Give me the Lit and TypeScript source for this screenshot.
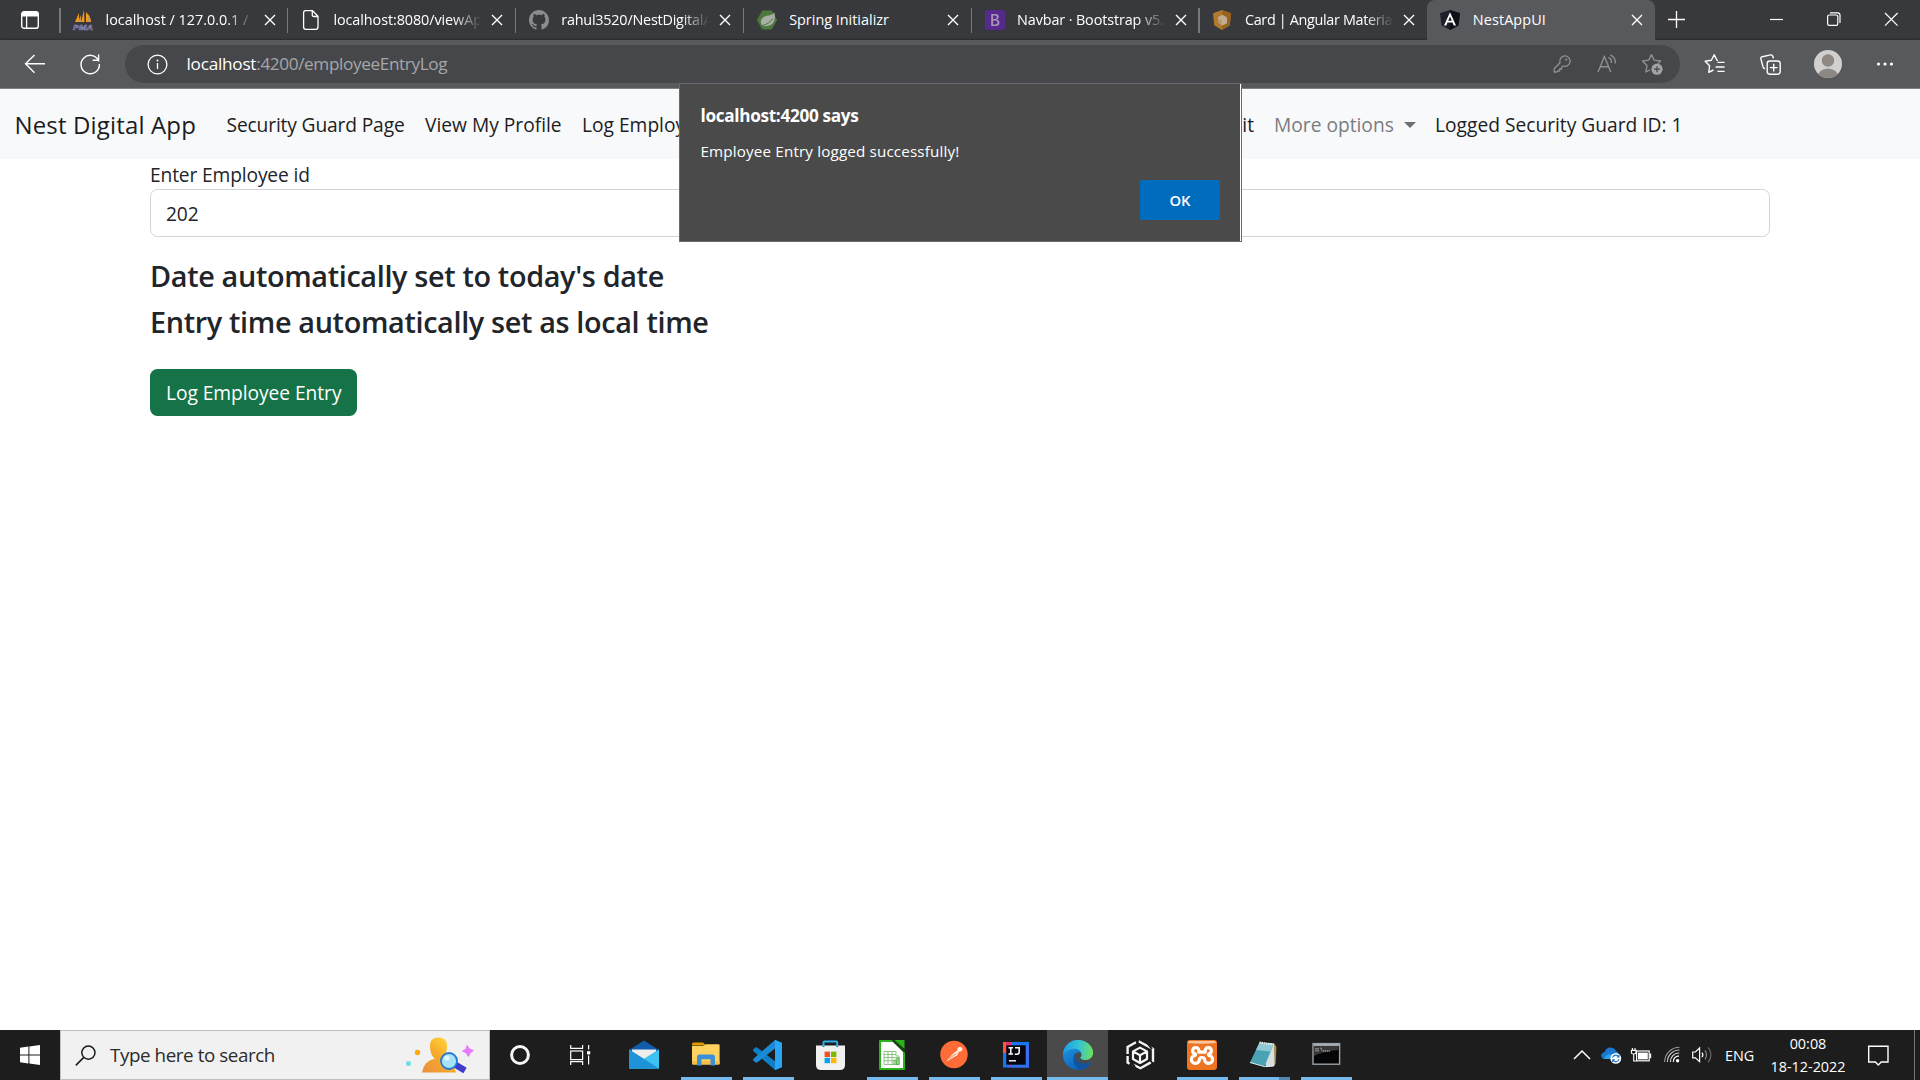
import { LitElement, html, css, svg } from "lit";
import { customElement } from "lit/decorators.js";
import { classMap } from "lit/directives/class-map.js";

const icon = (w: number, h: number, body: unknown) =>
  html`<svg width=${w} height=${h} viewBox="0 0 ${w} ${h}" fill="none">${body}</svg>`;

const closeX = icon(12, 12, svg`<path d="M1 1 L11 11 M11 1 L1 11" stroke="#fff" stroke-width="1.4"/>`);

/* ---- tab favicons (20 x 20) ---- */
const pma = icon(20, 20, svg`
  <path d="M2 12 L6 3 L6 12 Z M8 12 L11 0 L11.5 12 Z M13 12 L13 2 Q18 7 18 12 Z" fill="#f39a1d"/>
  <path d="M5 12 L8 5 V12 Z M14 12 L16 4 L17 12 Z" fill="#c9955a"/>
  <text x="0" y="19.5" font-family="Liberation Sans" font-size="8" font-weight="700" font-style="italic" textLength="20" lengthAdjust="spacingAndGlyphs" fill="#34336b" stroke="#9a9ac4" stroke-width=".5">PMA</text>`);
const fileIcon = icon(20, 20, svg`<path d="M4.5 .7 H11.5 L17 6.2 V17 Q17 19.3 14.7 19.3 H4.8 Q2.6 19.3 2.6 17 V2.8 Q2.6 .7 4.5 .7 Z M11.3 .9 V5 Q11.3 6.5 12.8 6.5 H16.8" stroke="#fff" stroke-width="1.3"/>`);
const github = icon(20, 20, svg`<path transform="scale(1.25)" fill="#8b8c8e" d="M8 0C3.58 0 0 3.58 0 8c0 3.54 2.29 6.53 5.47 7.59.4.07.55-.17.55-.38 0-.19-.01-.82-.01-1.49-2.01.37-2.53-.49-2.69-.94-.09-.23-.48-.94-.82-1.13-.28-.15-.68-.52-.01-.53.63-.01 1.08.58 1.23.82.72 1.21 1.87.87 2.33.66.07-.52.28-.87.51-1.07-1.78-.2-3.64-.89-3.64-3.95 0-.87.31-1.59.82-2.15-.08-.2-.36-1.02.08-2.12 0 0 .67-.21 2.2.82.64-.18 1.32-.27 2-.27s1.36.09 2 .27c1.53-1.04 2.2-.82 2.2-.82.44 1.1.16 1.92.08 2.12.51.56.82 1.27.82 2.15 0 3.07-1.87 3.75-3.65 3.95.29.25.54.73.54 1.48 0 1.07-.01 1.93-.01 2.2 0 .21.15.46.55.38A8.01 8.01 0 0 0 16 8c0-4.42-3.58-8-8-8z"/>`);
const spring = icon(20, 20, svg`
  <path d="M5.5 1 H14.5 L19.6 10 L14.5 19 H5.5 L.4 10 Z" fill="#4d7a3c" stroke="#4d7a3c" stroke-linejoin="round"/>
  <path d="M17.4 2.6 Q16 5 12 5.6 C6.5 6 3.3 9 4 13 Q4.4 15 6 16 C14 17 19.5 13 17.4 2.6 Z" fill="#a9aea7"/>
  <path d="M4 15.8 Q12 14.5 15.8 8.5" stroke="#4d7a3c" stroke-width="1"/>`);
const bootstrap = icon(20, 20, svg`<rect width="20" height="20" rx="2.5" fill="#552a8c"/>
  <path d="M6.2 4 H10.6 Q13.7 4 13.7 6.9 Q13.7 9 11.6 9.6 Q14.4 10.1 14.4 12.8 Q14.4 16 10.8 16 H6.2 Z M8 5.6 V9 H10 Q11.9 9 11.9 7.3 Q11.9 5.6 10 5.6 Z M8 10.4 V14.4 H10.4 Q12.5 14.4 12.5 12.4 Q12.5 10.4 10.4 10.4 Z" fill="#aa95b8" fill-rule="evenodd"/>`);
const material = icon(20, 20, svg`
  <path d="M10 0 L19 3.2 L17.8 15.2 L10 20 L2.2 15.2 L1 3.2 Z" fill="#b0792c"/>
  <path d="M10 0 L19 3.2 L17.8 15.2 L10 20 Z" fill="#96641f"/>
  <path d="M6 7 L10.5 4.8 L15 7.5 V13.2 L10.5 15.6 L6 12.5 Z" fill="#c2ad91"/>
  <path d="M6 9.4 L9.8 11.2 M6 11.4 L9.8 13.2" stroke="#b0792c" stroke-width=".7"/>`);
const angular = icon(20, 20, svg`
  <path d="M10 0 L20 3.2 L18.4 15.6 L10 20 L1.6 15.6 L0 3.2 Z" fill="#1b202b"/>
  <path d="M10 0 L20 3.2 L18.4 15.6 L10 20 Z" fill="#0d1017"/>
  <path d="M10 2.2 L16 15.6 H13.7 L12.5 12.6 H7.5 L6.3 15.6 H4 Z M10 6.4 L8.2 10.8 H11.8 Z" fill="#fff" fill-rule="evenodd"/>`);

const tabs = [
  { icon: pma, title: "localhost / 127.0.0.1 / n", cls: "t1" },
  { icon: fileIcon, title: "localhost:8080/viewAp", cls: "t2" },
  { icon: github, title: "rahul3520/NestDigitalA", cls: "t3" },
  { icon: spring, title: "Spring Initializr", cls: "t4" },
  { icon: bootstrap, title: "Navbar · Bootstrap v5.", cls: "t5" },
  { icon: material, title: "Card | Angular Materia", cls: "t6" },
  { icon: angular, title: "NestAppUI", cls: "t7", active: true },
];

/* ---- taskbar app icons (32 x 32) ---- */
const mail = icon(32, 32, svg`
  <path d="M1 11 L16 1.6 L31 11 V15 H1 Z" fill="#0f5cab"/><path d="M4 10.5 H28 V22 H4 Z" fill="#ededed"/>
  <path d="M1 10.5 L16 20 L31 10.5 V29.5 H1 Z" fill="#2aa9e8"/>
  <path d="M1 29.5 L31 10.5 V29.5 Z" fill="#3cc3f2"/><path d="M1 10.5 L31 29.5 H1 Z" fill="#1e93da"/>`);
const explorer = icon(32, 32, svg`
  <path d="M2 5 Q2 3.5 3.5 3.5 H13 L16 6.5 H2 Z" fill="#e09b00"/><path d="M2 7 H13 L16 5.2 H28.5 Q29.6 5.2 29.6 6.5 V24.5 Q29.6 25.5 28.5 25.5 H3.3 Q2 25.5 2 24 Z" fill="#ffd25f"/>
  <path d="M2 22 H29.6 V24.5 Q29.6 25.5 28.5 25.5 H3.3 Q2 25.5 2 24 Z" fill="#f4bf45"/>
  <path d="M7 26.5 V18.2 Q7 15.6 9.6 15.6 H22.4 Q25 15.6 25 18.2 V26.5 H20.5 V20.2 H11.5 V26.5 Z" fill="#3b8fd9"/>`);
const vscode = icon(32, 32, svg`
  <path d="M23 1 L30 4 V28 L23 31 L1.5 12.2 Q.4 11.2 1.5 10.2 L3.4 8.6 Q4.3 8 5.2 8.6 L23 22.3 Z" fill="#0f7fc9"/>
  <path d="M23 1 L30 4 V28 L23 31 V22.5 V9.5 L5.2 23.4 Q4.3 24 3.4 23.3 L1.5 21.7 Q.5 20.8 1.5 19.8 Z" fill="#1a8ad6"/>
  <path d="M23 1 L30 4 V28 L23 31 Z" fill="#2aa5f5"/>`);
const store = icon(32, 32, svg`
  <path d="M9.5 8 V3.6 Q9.5 2.4 10.7 2.4 H22 Q23.2 2.4 23.2 3.6 V8" stroke="#26b0ee" stroke-width="2"/>
  <path d="M2 6.6 H31 V26 Q31 31 26 31 H7 Q2 31 2 26 Z" fill="#f1f1f1"/>
  <path d="M9.5 6.6 V8 M23.2 6.6 V8" stroke="#1c86c0" stroke-width="2"/>
  <rect x="10.6" y="12.6" width="5.4" height="5.4" fill="#f25022"/><rect x="17" y="12.6" width="5.4" height="5.4" fill="#7fba00"/>
  <rect x="10.6" y="18.8" width="5.4" height="5.4" fill="#00a4ef"/><rect x="17" y="18.8" width="5.4" height="5.4" fill="#ffb900"/>`);
const calc = icon(32, 32, svg`
  <path d="M4 2 H17.5 L28 12.5 V30 H4 Z" fill="#fff" stroke="#2bb31c" stroke-width="2" stroke-linejoin="round"/>
  <path d="M18.5 1 H28.5 V10 Z" fill="#2bb31c"/><path d="M16.5 1 L29 13" stroke="#1c3f16" stroke-width="2"/>
  <path d="M8 12.5 H20 V17 H23 V25.5 H8 Z M8 15.5 H20 M8 18.5 H23 M8 21.7 H17 M12 12.5 V25.5 M16 12.5 V25.5" stroke="#8bc382" stroke-width="1"/>
  <path d="M18 26 V21 H20 V26 M21 26 V19.5 H23 V26" stroke="#5fb454" stroke-width="1.2"/>`);
const postman = icon(32, 32, svg`<circle cx="16" cy="15.5" r="13.7" fill="#ff6c37"/>
  <path d="M8.5 22.6 Q14 14.5 19.5 11.5 Q18.8 8 22 8 Q25 8 24.3 11 Q23.3 13 20.8 12.7 L19.3 16.2 Q13 19.5 8.5 22.6 Z" fill="#fff0e8"/>
  <path d="M11 19.3 L18.5 14.8" stroke="#ff6c37" stroke-width=".8"/>`);
const intellij = icon(32, 32, svg`
  <path d="M3 3 H14 L8 16 L3 14 Z" fill="#fc5a2c"/><path d="M6 3 H17 V28 H6 Z" fill="#e4316f"/><path d="M12 3 H29 V28.5 H12 Z" fill="#1976ee"/><path d="M3 14 H9 V28.5 H3 Z" fill="#1976ee"/><path d="M8 27 H29 V28.5 H8 Z M20 10 L29 6 V28 Z" fill="#3b6cf3"/>
  <rect x="6.3" y="6.3" width="19.4" height="19.4" fill="#080510"/>
  <path d="M8.5 8.7 H13 M10.8 8.7 V15 M8.5 15 H13 M15 8.7 H19.2 V13 Q19.2 15.2 17 15.2 H14.8" stroke="#fff" stroke-width="1.5"/><path d="M9 21.8 H16" stroke="#fff" stroke-width="1.4"/>`);
const edge = icon(32, 32, svg`
  <defs>
    <linearGradient id="eg" x1="2" y1="8" x2="31" y2="12" gradientUnits="userSpaceOnUse"><stop stop-color="#1f9fe3"/><stop offset=".5" stop-color="#35c3d5"/><stop offset="1" stop-color="#6ee05a"/></linearGradient>
    <linearGradient id="eb" x1="4" y1="10" x2="16" y2="30" gradientUnits="userSpaceOnUse"><stop stop-color="#1d8ede"/><stop offset="1" stop-color="#0b62b8"/></linearGradient>
  </defs>
  <circle cx="16" cy="16" r="15" fill="url(#eb)"/>
  <path d="M1 15.5 C1.5 7 8 1 16 1 C24.5 1 31 7 31 13.6 C31 18.5 27.5 21 23.6 21 C20.5 21 18.4 20 18.4 18.8 C18.4 18 19.6 17.4 19.6 15.4 C19.6 12.2 16.5 9.8 12.5 9.8 C7 9.8 2.5 13 1 15.5 Z" fill="url(#eg)"/>
  <path d="M12.6 17 C13 13 19 11.5 19.6 15.4 C19.6 17.4 18.4 18 18.4 18.8 C18.4 20 20.5 21 23.6 21 C27.5 21 31 18.5 31 13.6 L32 14 V23 L29.6 23.2 C23 28 13 25 12.6 17 Z" fill="#4a4a4a"/>
  <path d="M13 14 C12 21 18 26.5 28.6 23.4 Q30 23 29.2 24.2 C27 28 22.5 30.7 18 31 C12 28 9.5 20 13 14 Z" fill="#12539f"/>
  <path d="M18.4 18.8 C18.4 20 20.5 21 23.6 21 C27.5 21 31 18.5 31 13.6 C31 10 28 6 25 4 L18.4 12 C20.5 14.5 19.5 17 18.4 18.8 Z" fill="url(#eg)"/>`);
const cube = icon(32, 32, svg`
  <path d="M12 3.2 L3.6 8 V15 M3.6 17 V23.5 L5.6 24.7 M14.5 2.2 L16.4 3.2 L29 10 V22 L26 23.8 M26.4 23.6 L16.4 29.2 L9 25.5" stroke="#f4f4f4" stroke-width="2.4"/>
  <path d="M16 8.6 L23 12.4 V20 L16 24 L9 20 V12.4 Z M9 12.4 L16 16.2 L23 12.4 M16 16.2 V24" stroke="#f4f4f4" stroke-width="2.2" stroke-linejoin="round"/>
  <path d="M23 4 L28 10 M13.5 1 V6 M7 22 L11 28 M26 21 L30 26" stroke="#1d1d1d" stroke-width="1.8"/>`);
const xampp = icon(32, 32, svg`<rect x="1" y="1" width="30" height="30" rx="3" fill="#ef7422"/>
  <path d="M2 4 Q2 2 4 2 H28 Q30 2 30 4 Q16 5.5 2 4 Z" fill="#f8c69e"/>
  <path d="M16 13.2 H12.8 V11.2 A3.1 3.1 0 1 0 9 14.8 Q10.2 15.4 9 16.4 A4 4 0 1 0 13.4 21 Q13.4 18.5 16 18.5 Q18.6 18.5 18.6 21 A4 4 0 1 0 23 16.4 Q21.8 15.4 23 14.8 A3.1 3.1 0 1 0 19.2 11.2 V13.2 Z" stroke="#fff" stroke-width="3.2" stroke-linejoin="round"/>`);
const notepad = icon(32, 32, svg`
  <path d="M26 4 L28.5 8 L27.6 25 L24 27 Z" fill="#a8894d"/>
  <path d="M12 3.5 L26 4.5 L26.5 27 L18 28 Z" fill="#d5dfe2"/>
  <path d="M11.5 3.5 L25.5 5.5 L16.5 27.6 L2 23.5 Z" fill="#4aa3b5"/>
  <path d="M11.5 3.5 L25.5 5.5 L22.5 12.5 L8 11 Z" fill="#8fc9d3"/>
  <path d="M11.5 3.5 L25.5 5.5" stroke="#e8eef0" stroke-width="2" stroke-dasharray="1.4 .8"/><path d="M2 23.5 L16.5 27.6 L25.5 27" stroke="#e5f0f2" stroke-width="1"/>`);
const cmd = icon(32, 32, svg`
  <rect x="3" y="4.6" width="26.6" height="20.6" fill="#050505" stroke="#99a3ab" stroke-width="1.4"/>
  <path d="M3.7 6 H28.9" stroke="#c8cdd2" stroke-width="1.6"/><path d="M4 7 H28.5 V11 Q14 12 4 17 Z" fill="#383838"/>
  <path d="M6 9 V13 M8 9 V13 M10.5 8.7 L12.5 12 M13 12 H20" stroke="#c4c4c4" stroke-width="1" stroke-dasharray="1.4 .6"/>`);

const apps: { icon: unknown; run: string }[] = [
  { icon: mail, run: "" }, { icon: explorer, run: "run" }, { icon: vscode, run: "run" }, { icon: store, run: "" },
  { icon: calc, run: "run" }, { icon: postman, run: "run" }, { icon: intellij, run: "run" }, { icon: edge, run: "focus" },
  { icon: cube, run: "" }, { icon: xampp, run: "run" }, { icon: notepad, run: "run multi" }, { icon: cmd, run: "run" },
];

const base = css`
  :host { display: block; font-family: "Open Sans", "Noto Sans", sans-serif; }
  * { box-sizing: border-box; }
  svg { display: block; flex: none; overflow: visible; }
  span { white-space: pre; }
`;

@customElement("browser-chrome")
class BrowserChrome extends LitElement {
  static styles = [base, css`
    .strip { display: flex; height: 40px; background: #38393d; box-shadow: inset 0 -2px 2px -1px #2a2b2e; }
    .lead { width: 59px; padding: 11px 0 0 21px; flex: none; }
    .tab { width: 227.9px; flex: none; display: flex; align-items: center; padding-left: 14px; height: 40px; }
    .tab::before { content: ""; width: 1.5px; height: 25px; background: #77787b; margin-left: -14px; margin-right: 12.5px; }
    .tab.active { background: #58595d; border-radius: 8px 8px 0 0; width: 228px; margin-left: 1px; padding-left: 13px; }
    .tab.active::before { background: transparent; margin-left: -13px; margin-right: 11.5px; }
    .title { margin-left: 12.5px; width: 147px; overflow: hidden; color: #fff; font-size: 14.4px; line-height: 22px; margin-top: -1px; }
    .title.fade { -webkit-mask-image: linear-gradient(90deg, #000 82%, transparent 101%); mask-image: linear-gradient(90deg, #000 82%, transparent 101%); }
    .tab .x { margin-left: 11px; }
    .plus { margin-left: 13px; margin-top: 11px; }
    .win { margin-left: auto; display: flex; align-items: flex-start; padding-top: 12px; gap: 43px; padding-right: 22px; }
    .tools { display: flex; align-items: center; height: 49px; background: #58595d; border-bottom: 1px solid #808184; }
    .back { margin-left: 24px; }
    .reload { margin-left: 35px; }
    .pill { margin-left: 25px; width: 1555px; height: 38px; border-radius: 19px; background: #46474b; display: flex; align-items: center; padding-left: 22px; }
    .url { margin-left: 18.5px; font-size: 17.2px; line-height: 26px; color: #a5a6a8; display: flex; margin-top: -1px; }
    .host { color: #fff; letter-spacing: -0.25px; }
    .path { letter-spacing: -0.38px; }
    .pillend { margin-left: auto; display: flex; gap: 24px; padding-right: 17.5px; align-items: center; }
    .key { margin-right: 1px; }
    .side { display: flex; align-items: center; padding-left: 24px; }
    .collections { margin-left: 35px; }
    .avatar { margin-left: 33px; }
    .dots { margin-left: 34px; }
    .t2 { letter-spacing: -0.08px; }
    .t3 { letter-spacing: -0.22px; }
    .t5 { letter-spacing: -0.12px; }
    .t6 { letter-spacing: -0.33px; }
    .t7 { letter-spacing: 0.1px; }
  `];
  render() {
    return html`
      <div class="strip">
        <div class="lead">${icon(18, 18, svg`<path d="M1 5 V3 Q1 .8 3.2 .8 H14.8 Q17 .8 17 3 V5.5 H1 Z" fill="#fff"/><rect x=".7" y=".7" width="16.6" height="16.6" rx="2.4" stroke="#fff" stroke-width="1.4"/><path d="M5.6 5 V17" stroke="#fff" stroke-width="1.3"/>`)}</div>
        ${tabs.map((t) => html`<div class=${classMap({ tab: true, active: !!t.active })}>${t.icon}
          <div class=${classMap({ title: true, fade: t.cls !== "t4" && t.cls !== "t7" })}><span class=${t.cls}>${t.title}</span></div>
          <div class="x">${closeX}</div></div>`)}
        <div class="plus">${icon(17, 17, svg`<path d="M0 8.5 H17 M8.5 0 V17" stroke="#fff" stroke-width="1.3"/>`)}</div>
        <div class="win">
          ${icon(14, 14, svg`<path d="M0 7.5 H13" stroke="#fff" stroke-width="1.2"/>`)}
          ${icon(14, 14, svg`<rect x=".6" y="3" width="10.2" height="10.4" rx="1.6" stroke="#fff" stroke-width="1.2"/><path d="M3 .9 H10.6 Q13 .9 13 3.3 V11" stroke="#fff" stroke-width="1.2"/>`)}
          ${icon(14, 14, svg`<path d="M1 1 L13.6 13.6 M13.6 1 L1 13.6" stroke="#fff" stroke-width="1.2"/>`)}
        </div>
      </div>
      <div class="tools">
        <div class="back">${icon(21, 20, svg`<path d="M10.5 1 L1.5 9.8 L10.5 18.8 M1.5 9.8 H21" stroke="#fff" stroke-width="1.4"/>`)}</div>
        <div class="reload">${icon(20, 20, svg`<path d="M18.9 7.5 A9.2 9.2 0 1 0 19.4 10 M18.6 .5 V6.2 H12.6" stroke="#fff" stroke-width="1.4"/>`)}</div>
        <div class="pill">
          ${icon(21, 21, svg`<circle cx="10.5" cy="10.5" r="9.4" stroke="#fff" stroke-width="1.3"/><path d="M10.5 9 V15" stroke="#fff" stroke-width="1.3"/><circle cx="10.5" cy="6.4" r="1" fill="#fff"/>`)}
          <div class="url"><span class="host">localhost</span><span class="path">:4200/employeeEntryLog</span></div>
          <div class="pillend">
            <div class="key">${icon(20, 20, svg`<path d="M8 8.8 A5.2 5.2 0 1 1 11 12 L9.6 13.4 V15 H7.6 V17 H6 L4.8 18 H2.2 V14.8 Z" stroke="#8f9092" stroke-width="1.3" stroke-linejoin="round"/><circle cx="14.2" cy="5.6" r="1.1" fill="#8f9092"/>`)}</div>
            ${icon(20, 20, svg`<path d="M1 18 L7.4 2.5 L13.8 18 M3 12.8 H11.8 M11.5 3.4 Q15 5.2 14.4 9 M13.4 .8 Q19 3.5 18.2 9.5" stroke="#8f9092" stroke-width="1.4"/>`)}
            ${icon(22, 22, svg`<path d="M10.5 1.5 L13.2 7.1 L19.6 8 L17.2 10.4 M9 16.8 L4.9 19 L6 12.5 L1.4 8 L7.8 7.1 L10.5 1.5" stroke="#8f9092" stroke-width="1.4" stroke-linejoin="round"/><circle cx="16" cy="16.2" r="5.6" fill="#a2a3a5"/><path d="M16 13.2 V19.2 M13 16.2 H19" stroke="#46474b" stroke-width="1.2"/>`)}
          </div>
        </div>
        <div class="side">
          ${icon(21, 20, svg`<path d="M14 6.4 L13 6.2 L10.2 .8 L7.4 6.2 L1.2 7.3 L5.6 11.7 L4.8 18.3 L9.4 16 M13.4 8.4 H20.6 M11.6 13 H20.6 M13.4 17.4 H20.6" stroke="#fff" stroke-width="1.4" stroke-linejoin="round"/>`)}
          <div class="collections">${icon(21, 21, svg`<rect x="7.2" y="7" width="13" height="13.2" rx="2.6" stroke="#fff" stroke-width="1.4"/><path d="M13.7 9.8 V17.4 M9.9 13.6 H17.5 M5 14.8 Q3.6 14.4 3.1 13 L.9 5 Q.5 3.2 2.3 2.7 L10.6 .9 Q12.3 .6 12.8 2.2 L13.4 4.4" stroke="#fff" stroke-width="1.4"/>`)}</div>
          <div class="avatar">${icon(28, 28, svg`<clipPath id="av"><circle cx="14" cy="14" r="14"/></clipPath><circle cx="14" cy="14" r="14" fill="#d2d0ce"/><circle cx="14" cy="10.5" r="6.2" fill="#8d8883"/><ellipse cx="14" cy="27" rx="10.5" ry="8.6" fill="#8d8883" clip-path="url(#av)"/>`)}</div>
          <div class="dots">${icon(18, 6, svg`<circle cx="2.5" cy="3" r="1.6" fill="#fff"/><circle cx="9" cy="3" r="1.6" fill="#fff"/><circle cx="15.5" cy="3" r="1.6" fill="#fff"/>`)}</div>
        </div>
      </div>`;
  }
}

@customElement("guard-page")
class GuardPage extends LitElement {
  static styles = [base, css`
    :host { height: 941px; background: #fff; color: #212529; font-size: 19.2px; }
    nav { display: flex; align-items: center; height: 70px; background: #f8f9fa; padding-left: 14.5px; color: #1c1d1f; line-height: 30px; padding-top: 1px; }
    nav > div { flex: none; }
    .brand { font-size: 24px; width: 212px; letter-spacing: 0.15px; }
    .l1 { width: 198.5px; letter-spacing: -0.14px; }
    .l2 { width: 157px; }
    .l3 { width: 430px; }
    .l4 { width: 242px; text-align: right; }
    .more { color: #7b7c7e; margin-left: 20px; width: 161px; display: flex; align-items: center; }
    .caret { border: 6px solid transparent; border-top-color: #6f7072; border-bottom: 0; margin-left: 10.5px; }
    main { padding: 0 150px; }
    .label { height: 30px; line-height: 30px; padding-top: 1px; letter-spacing: -0.14px; }
    .input { height: 48px; border: 1.25px solid #ced4da; border-radius: 7.5px; padding-left: 15px; line-height: 47px; letter-spacing: -0.1px; }
    h4 { margin: 0; font-size: 28.8px; font-weight: 600; line-height: 36px; letter-spacing: -0.34px; }
    .h1 { margin-top: 21px; }
    .h2 { margin-top: 10px; }
    button { display: block; font: inherit; margin-top: 29px; height: 47px; width: 207px; border: 0; border-radius: 7.5px; background: #157347; color: #fff; padding: 0 16px; text-align: left; letter-spacing: -0.05px; }
  `];
  render() {
    return html`
      <nav>
        <div class="brand"><span>Nest Digital App</span></div>
        <div class="l1"><span>Security Guard Page</span></div>
        <div class="l2"><span>View My Profile</span></div>
        <div class="l3"><span>Log Employee Entry</span></div>
        <div class="l4"><span>Log Employee Exit</span></div>
        <div class="more"><span>More options</span><i class="caret"></i></div>
        <div><span>Logged Security Guard ID: 1</span></div>
      </nav>
      <main>
        <div class="label"><span>Enter Employee id</span></div>
        <div class="input"><span>202</span></div>
        <h4 class="h1"><span>Date automatically set to today's date</span></h4>
        <h4 class="h2"><span>Entry time automatically set as local time</span></h4>
        <button><span>Log Employee Entry</span></button>
      </main>`;
  }
}

@customElement("alert-dialog")
class AlertDialog extends LitElement {
  static styles = [base, css`
    .box { width: 563px; height: 159px; border: 1px solid #69696b; background: #4a4a4a; box-shadow: inset -1px 0 #fff; color: #fff; padding: 19px 21px 0 20.5px; display: flex; flex-direction: column; }
    .head { font-size: 17.2px; font-weight: 700; line-height: 26px; letter-spacing: -0.33px; }
    .msg { font-size: 15.2px; line-height: 22px; margin-top: 11px; letter-spacing: 0.16px; }
    .ok { align-self: flex-end; margin-top: 18px; width: 80px; height: 40px; border-radius: 2.5px; background: #006cbe; font-size: 14.8px; font-weight: 600; display: flex; align-items: center; justify-content: center; }
  `];
  render() {
    return html`<div class="box">
      <div class="head"><span>localhost:4200 says</span></div>
      <div class="msg"><span>Employee Entry logged successfully!</span></div>
      <div class="ok"><span>OK</span></div>
    </div>`;
  }
}

@customElement("task-bar")
class TaskBar extends LitElement {
  static styles = [base, css`
    .bar { display: flex; height: 50px; background: #1d1d1d; color: #fff; align-items: stretch; }
    .start { width: 60px; display: grid; place-items: center; }
    .search { width: 430px; background: #f1f1f1; border: 1px solid #bfbfbf; display: flex; align-items: center; padding: 0 15px 0 14px; color: #2b2b2b; font-size: 18.8px; letter-spacing: -0.42px; }
    .q { margin-left: 14px; }
    .art { margin-left: auto; }
    .sys { width: 60px; display: grid; place-items: center; }
    .sys + .sys { width: 63px; padding-right: 3px; }
    .app { width: 62px; flex: none; display: flex; flex-direction: column; align-items: center; padding-top: 9px; justify-content: space-between; }
    .app.run::after, .app.focus::after { content: ""; height: 3px; width: 51px; background: #76b9ed; }
    .app.focus { background: #4a4a4a; width: 61px; margin-right: 1px; }
    .app.focus::after { width: 61px; }
    .app.multi::after { background: linear-gradient(90deg, #76b9ed 40px, #5486b0 40px); }
    .tray { margin-left: auto; display: flex; align-items: center; font-size: 14.4px; }
    .clock { display: flex; flex-direction: column; align-items: center; width: 76px; margin-left: 17px; line-height: 23px; padding-bottom: 1px; }
    .end { width: 6px; align-self: stretch; border-left: 1px solid #777; margin-left: 25px; }
    .lang { margin-left: 12px; width: 28px; }
    .g1 { margin-left: 10px; }
    .g2 { margin-left: 9px; }
    .g3 { margin-left: 13px; }
    .g4 { margin-left: 12px; }
    .note { margin-left: 22px; }
  `];
  render() {
    return html`<div class="bar">
      <div class="start">${icon(20, 20, svg`<path d="M0 2.8 L8.4 1.6 V9.4 H0 Z M9.4 1.5 L20 0 V9.4 H9.4 Z M0 10.4 H8.4 V18.5 L0 17.3 Z M9.4 10.4 H20 V20 L9.4 18.6 Z" fill="#fff"/>`)}</div>
      <div class="search">
        ${icon(21, 21, svg`<circle cx="13.4" cy="7.6" r="6.6" stroke="#1a1a1a" stroke-width="1.5"/><path d="M8.8 12.4 L.8 20.4" stroke="#1a1a1a" stroke-width="1.5"/>`)}
        <span class="q">Type here to search</span>
        <div class="art">${icon(68, 36, svg`
          <defs><linearGradient id="bd" x1="18" y1="34" x2="46" y2="4" gradientUnits="userSpaceOnUse"><stop stop-color="#ea9040"/><stop offset=".5" stop-color="#f8a928"/><stop offset="1" stop-color="#ffd93b"/></linearGradient></defs>
          <path d="M16 35.5 Q18 23.5 29 21.5 Q24 18.5 24 8.5 Q24 .5 32.5 .5 Q41 .5 41 8.5 Q41 18.5 36.5 21.5 Q48 24 50 35.5 Z" fill="url(#bd)"/>
          <path d="M49 27.5 L59 33.5" stroke="#3f3ccb" stroke-width="6.4"/><circle cx="43" cy="24" r="8" fill="#a5e3f8" stroke="#2478d4" stroke-width="1.8"/><circle cx="41" cy="21" r="2.6" fill="#e4f8fe"/>
          <circle cx="11.5" cy="15.5" r="2.7" fill="#ffa908"/><circle cx="2.5" cy="26.5" r="2.5" fill="#6ddcea"/>
          <path d="M61 8.5 L63.5 12 L67.5 13.5 L64 16 L62.5 19.5 L60 15.7 L56.5 14 L60.2 12 Z" fill="#e57bf7" stroke="#e57bf7" stroke-linejoin="round"/>`)}</div>
      </div>
      <div class="sys">${icon(20, 20, svg`<circle cx="10" cy="10" r="8.4" stroke="#f5f5f5" stroke-width="3"/>`)}</div>
      <div class="sys">${icon(20, 20, svg`<path d="M.7 0 V3.3 H12.6 V0 M.7 20 V16.7 H12.6 V20 M18.6 0 V4.4 M18.6 10.5 V19.6" stroke="#fff" stroke-width="1.2"/><rect x=".7" y="6" width="11.9" height="8.6" stroke="#fff" stroke-width="1.2"/><rect x="17" y="6.2" width="3.2" height="3.2" fill="#fff"/>`)}</div>
      ${apps.map((a) => html`<div class="app ${a.run}">${a.icon}</div>`)}
      <div class="tray">
        ${icon(18, 10, svg`<path d="M1 9 L9 1 L17 9" stroke="#fff" stroke-width="1.5"/>`)}
        <div class="g1">${icon(21, 18, svg`<path d="M3 13 Q0 12 .3 9 Q.8 6.4 3.6 6 Q5 1.4 9.2 1.4 Q13.4 1.4 15 5 Q17.6 5.6 18 8.6 V13 Z" fill="#1a78d0"/><path d="M3 13 Q5.5 7 11 8.5 L18 13 Z" fill="#2ba3ee"/><circle cx="14.8" cy="12.4" r="5.4" fill="#fff"/><path d="M11.6 11.7 A3.3 3.3 0 0 1 17.6 10.6 M18 13.2 A3.3 3.3 0 0 1 12 14.3 M17.9 8.8 V11 H15.8 M11.7 16 V13.9 H13.8" stroke="#1c71bd" stroke-width="1.1"/>`)}</div>
        <div class="g2">${icon(20, 14, svg`<rect x="5.6" y="3" width="12.6" height="9.8" stroke="#fff" stroke-width="1.2"/><rect x="7" y="4.6" width="9.8" height="6.8" fill="#fff"/><rect x="18.6" y="5.6" width="1.6" height="4.6" fill="#fff"/><path d="M.4 2.4 H5 V4.6 Q5 6 2.7 6 Q.4 6 .4 4.6 Z M1.4 0 V2.4 M4 0 V2.4 M2.7 6 V13 H5.4" stroke="#fff" stroke-width="1.1"/>`)}</div>
        <div class="g3">${icon(16, 16, svg`<circle cx="13.6" cy="13.8" r="1.7" fill="#fff"/><path d="M9.4 14.8 A5 5 0 0 1 15 9.2" stroke="#fff" stroke-width="1.3"/><path d="M6.4 15 A8.6 8.6 0 0 1 15.2 6" stroke="#ddd" stroke-width="1.2"/><path d="M3.4 15 A12 12 0 0 1 15.4 3" stroke="#bbb" stroke-width="1.2"/><path d="M.6 15 A15 15 0 0 1 15.4 .2" stroke="#999" stroke-width="1.1"/>`)}</div>
        <div class="g4">${icon(21, 18, svg`<path d="M.7 6 H3.4 L7.6 2 V15.6 L3.4 11.8 H.7 Z" stroke="#fff" stroke-width="1.2"/><path d="M10 6.6 Q11.7 8.9 10 11.2" stroke="#fff" stroke-width="1.2"/><path d="M13 4.4 Q16 8.9 13 13.4" stroke="#888" stroke-width="1.2"/><path d="M16.2 1.4 Q21.6 8.9 16.2 16.4" stroke="#666" stroke-width="1.2"/>`)}</div>
        <div class="lang"><span>ENG</span></div>
        <div class="clock"><span>00:08</span><span>18-12-2022</span></div>
        <div class="note">${icon(21, 21, svg`<path d="M.7 1.2 H20 V17 H13.2 L10.3 20 L7.4 17 H.7 Z" stroke="#fff" stroke-width="1.4"/>`)}</div>
        <div class="end"></div>
      </div></div>`;
  }
}

@customElement("app-root")
class AppRoot extends LitElement {
  static styles = [base, css`
    :host { width: 1920px; height: 1080px; position: relative; overflow: hidden; }
    alert-dialog { position: absolute; left: 679px; top: 83px; }
  `];
  render() {
    return html`<browser-chrome></browser-chrome><guard-page></guard-page><task-bar></task-bar><alert-dialog></alert-dialog>`;
  }
}
